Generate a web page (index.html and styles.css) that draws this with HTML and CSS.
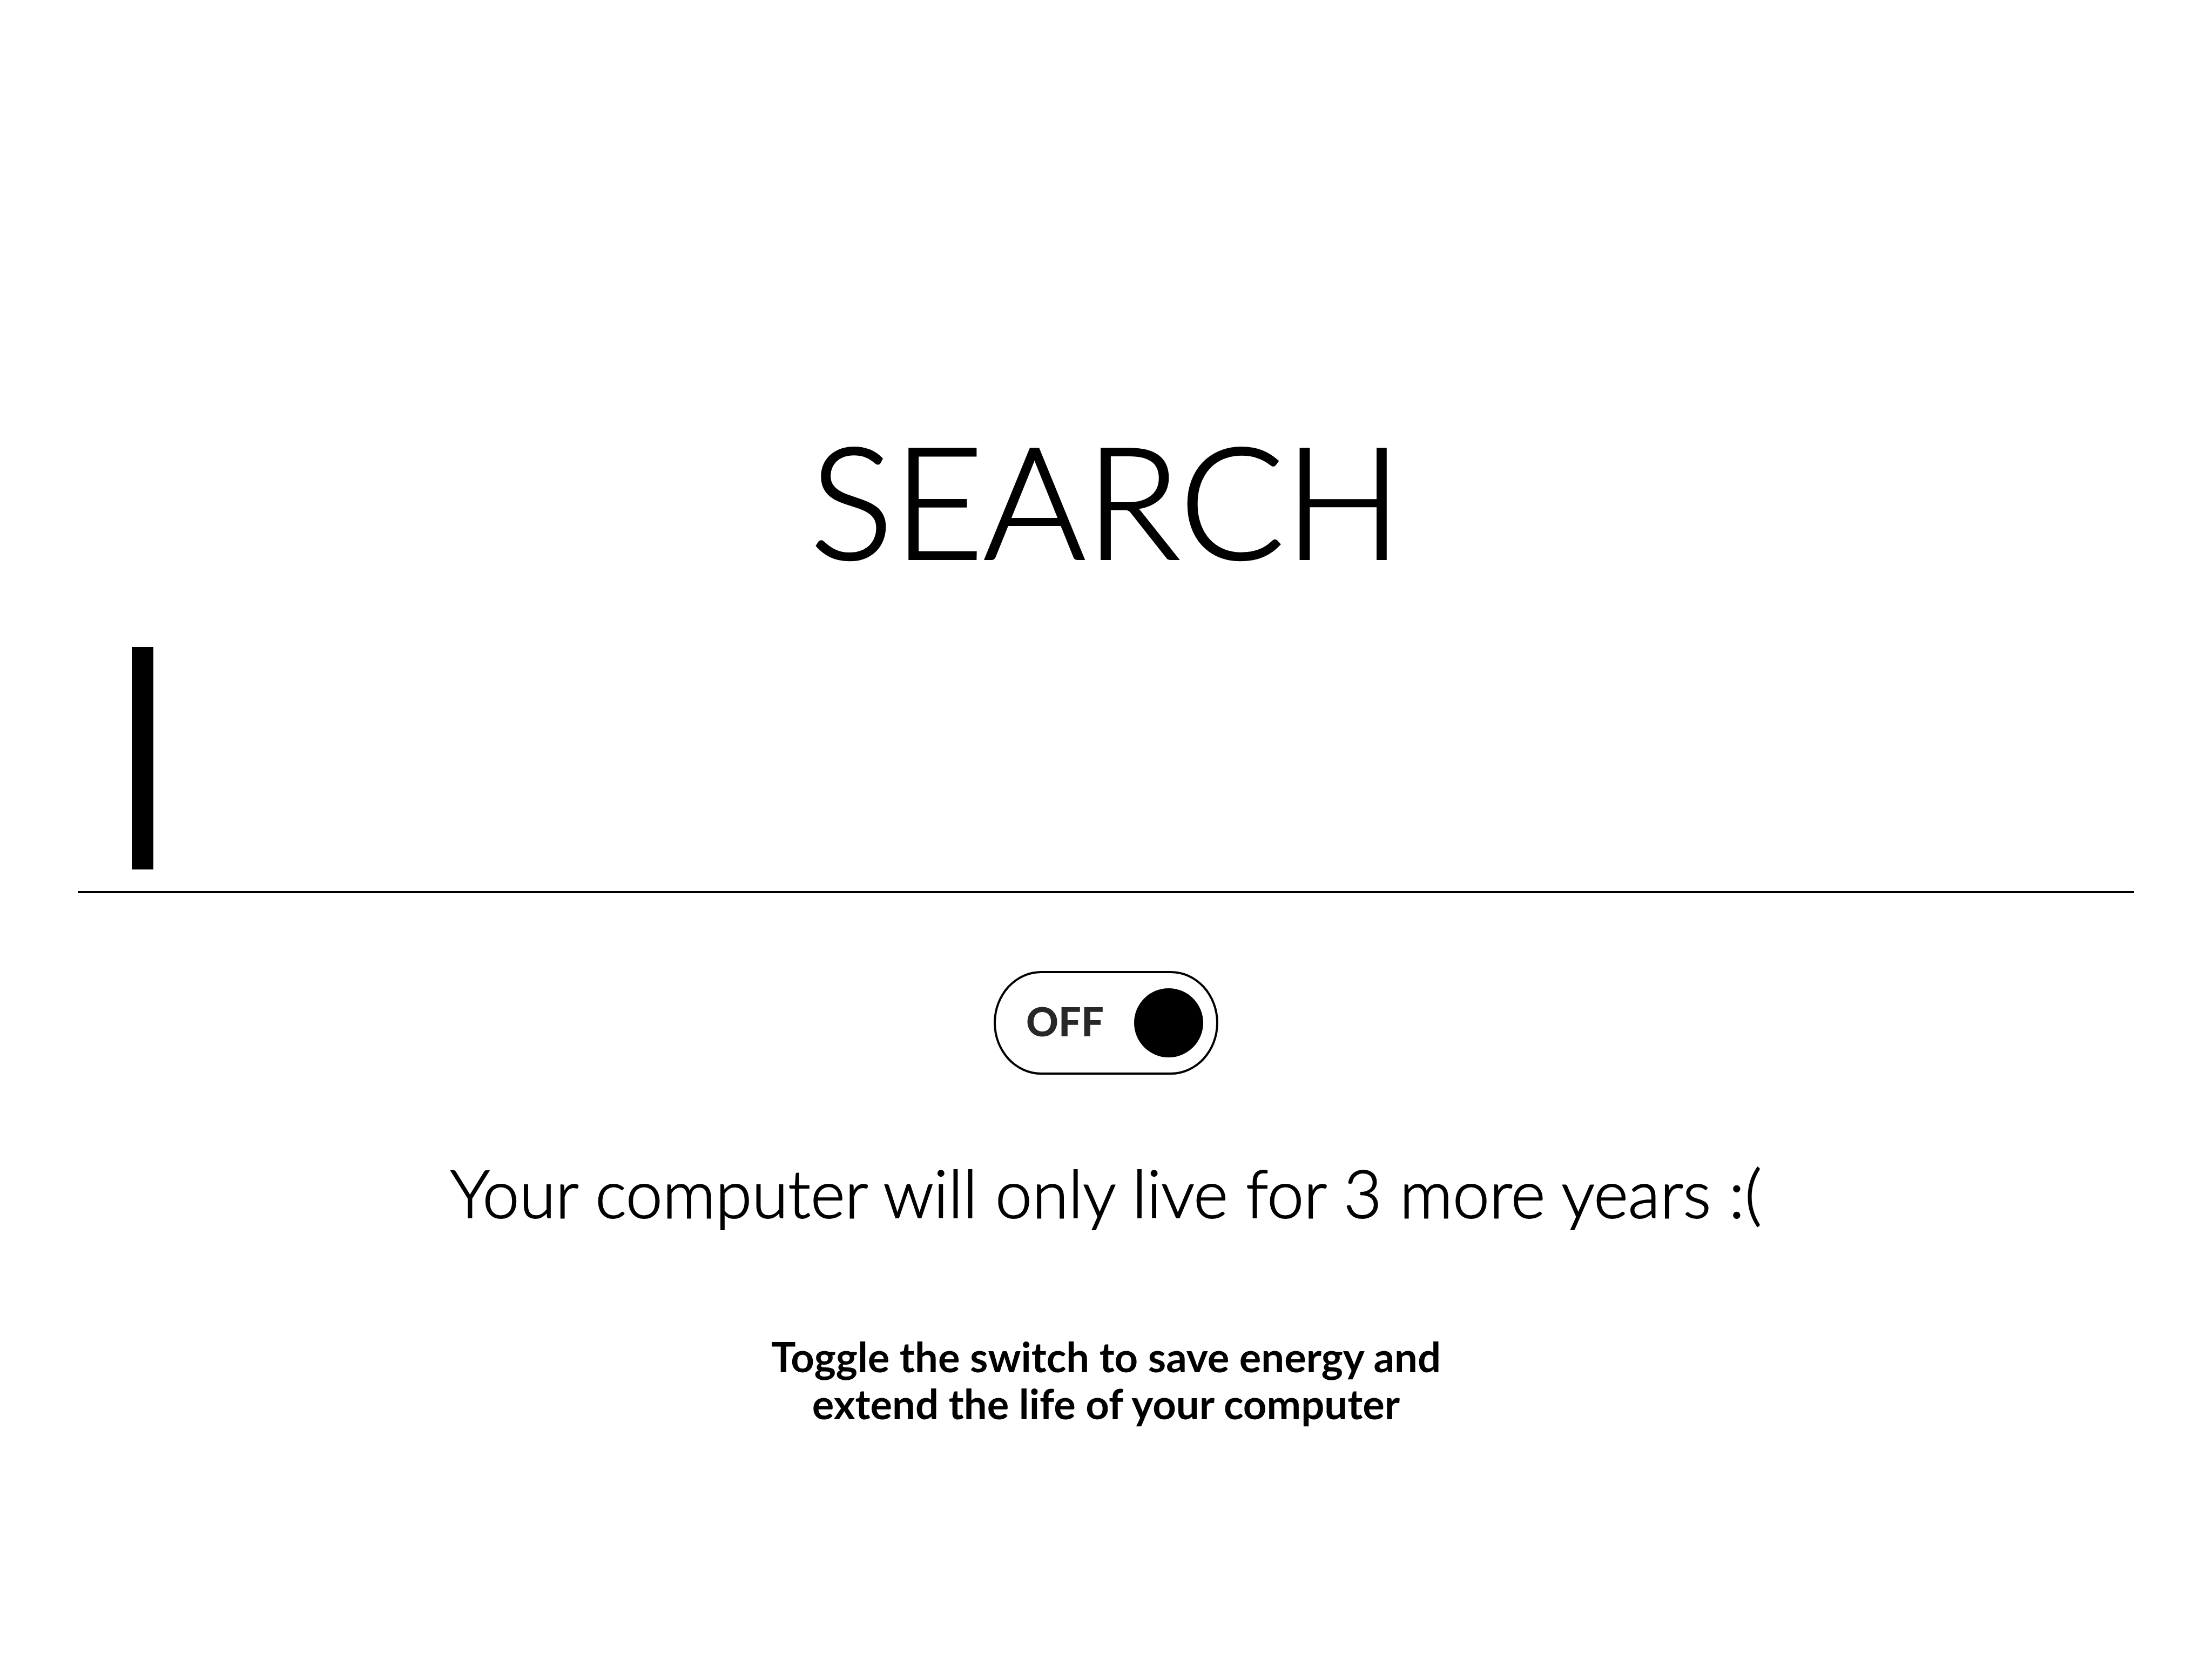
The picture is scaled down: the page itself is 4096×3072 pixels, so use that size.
FILE: index.html
```html
<!DOCTYPE html>
<html lang="en">
<head>
<meta charset="utf-8">
<title>Search</title>
<link rel="stylesheet" href="styles.css">
</head>
<body>
<main class="page">
  <form class="search">
    <label class="search-label" for="query">SEARCH</label>
    <div class="search-field">
      <span class="caret" aria-hidden="true"></span>
      <input class="search-input" id="query" type="text" autocomplete="off">
    </div>
  </form>
  <button class="switch" type="button" role="switch" aria-checked="false">
    <span class="switch-text">OFF</span>
    <span class="switch-knob"></span>
  </button>
  <p class="status">Your computer will only live for 3 more years :(</p>
  <p class="hint">Toggle the switch to save energy and<br>extend the life of your computer</p>
</main>
</body>
</html>
```
FILE: styles.css
```css
* {
  box-sizing: border-box;
}

body {
  margin: 0;
  background: #fff;
  color: #000;
  font-family: Lato, "Open Sans", sans-serif;
}

.page {
  display: flex;
  flex-direction: column;
  align-items: center;
  padding: 754px 144px 0;
}

.search {
  display: flex;
  flex-direction: column;
  align-items: center;
  align-self: stretch;
}

.search-label {
  font-size: 288px;
  font-weight: 300;
  line-height: 340px;
  -webkit-text-stroke: 4px currentColor;
}

.search-field {
  display: flex;
  align-self: stretch;
  margin-top: 104px;
  padding: 0 100px 40px;
  border-bottom: 4px solid #000;
}

.caret {
  width: 40px;
  height: 412px;
  background: #000;
}

.search-input {
  flex: 1;
  min-width: 0;
  border: 0;
  padding: 0 40px;
  outline: 0;
  background: none;
  font: inherit;
  font-weight: 300;
  font-size: 288px;
  caret-color: transparent;
}

.switch {
  display: flex;
  align-items: center;
  justify-content: space-between;
  width: 416px;
  height: 192px;
  margin-top: 144px;
  padding: 0 24px 0 56px;
  border: 4px solid #000;
  border-radius: 88px / 96px;
  background: none;
  color: #282828;
  font: inherit;
}

.switch-text {
  padding-bottom: 6px;
  font-size: 74px;
  font-weight: 900;
  line-height: 88px;
}

.switch-knob {
  width: 128px;
  height: 128px;
  border-radius: 50%;
  background: #000;
}

.status {
  margin: 138px 0 0;
  font-size: 122px;
  font-weight: 300;
  line-height: 160px;
  -webkit-text-stroke: 2px currentColor;
}

.hint {
  margin: 180px 0 0;
  font-size: 76px;
  font-weight: 700;
  line-height: 87px;
  text-align: center;
}
```
